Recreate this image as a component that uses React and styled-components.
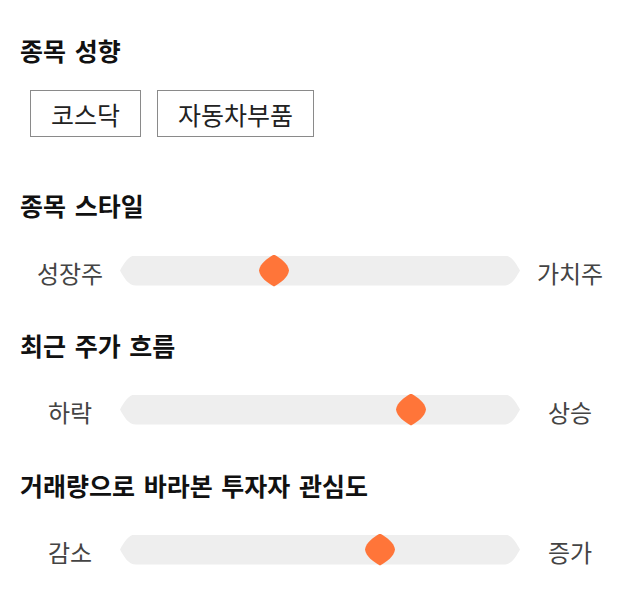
import React from "react";
import styled, { createGlobalStyle } from "styled-components";

const Global = createGlobalStyle`
  html, body { margin: 0; padding: 0; background: #fff; }
  body { font-family: "Noto Sans CJK KR", "Noto Sans", sans-serif; color: #111; }
`;

const Page = styled.div`
  width: 640px;
  min-height: 606px;
  padding: 35px 20px 20px 20px;
  box-sizing: border-box;
`;

const Section = styled.section`
  margin-bottom: ${(p) => p.$after}px;
`;

const Heading = styled.h2`
  margin: 0 0 ${(p) => p.$gap}px 0;
  font-size: 25px;
  line-height: 30px;
  font-weight: 700;
  color: #111;
  letter-spacing: 0;
  word-spacing: 3px;
`;

const Chips = styled.div`
  display: flex;
  gap: 16px;
  padding-left: 10px;
`;

const Chip = styled.div`
  height: 47px;
  box-sizing: border-box;
  border: 1px solid #8a8a8a;
  padding: 0 20px;
  display: flex;
  align-items: center;
  font-size: 25px;
  color: #222;
`;

const SliderRow = styled.div`
  display: grid;
  grid-template-columns: 100px 400px 100px;
  align-items: center;
  height: 30px;
`;

const Label = styled.span`
  text-align: center;
  font-size: 24px;
  line-height: 30px;
  color: #444;
  padding-top: 5px;
`;

const Track = styled.div`
  position: relative;
  width: 400px;
  height: 30px;
`;

const TrackShape = styled.div`
  width: 400px;
  height: 30px;
  background: #eeeeee;
  clip-path: path("M16,0 H384 C392,0 396,8 400,15 C396,22 392,30 384,30 H16 C8,30 4,22 0,15 C4,8 8,0 16,0 Z");
`;

const Thumb = styled.div`
  position: absolute;
  top: -1px;
  width: 30px;
  height: 32px;
  margin-left: -15px;
  background: #ff7539;
  clip-path: path("M15,0 C22,4 29,9 30,16 C29,23 22,28 15,32 C8,28 1,23 0,16 C1,9 8,4 15,0 Z");
`;

function Slider({ left, right, value }) {
  return (
    <SliderRow>
      <Label>{left}</Label>
      <Track>
        <TrackShape />
        <Thumb style={{ left: `${value * 100}%` }} />
      </Track>
      <Label>{right}</Label>
    </SliderRow>
  );
}

export default function App() {
  return (
    <>
      <Global />
      <Page>
        <Section $after={53}>
          <Heading $gap={25}>종목 성향</Heading>
          <Chips>
            <Chip>코스닥</Chip>
            <Chip>자동차부품</Chip>
          </Chips>
        </Section>
        <Section $after={47}>
          <Heading $gap={33}>종목 스타일</Heading>
          <Slider left="성장주" right="가치주" value={0.385} />
        </Section>
        <Section $after={48}>
          <Heading $gap={32}>최근 주가 흐름</Heading>
          <Slider left="하락" right="상승" value={0.7275} />
        </Section>
        <Section $after={0}>
          <Heading $gap={32}>거래량으로 바라본 투자자 관심도</Heading>
          <Slider left="감소" right="증가" value={0.65} />
        </Section>
      </Page>
    </>
  );
}
